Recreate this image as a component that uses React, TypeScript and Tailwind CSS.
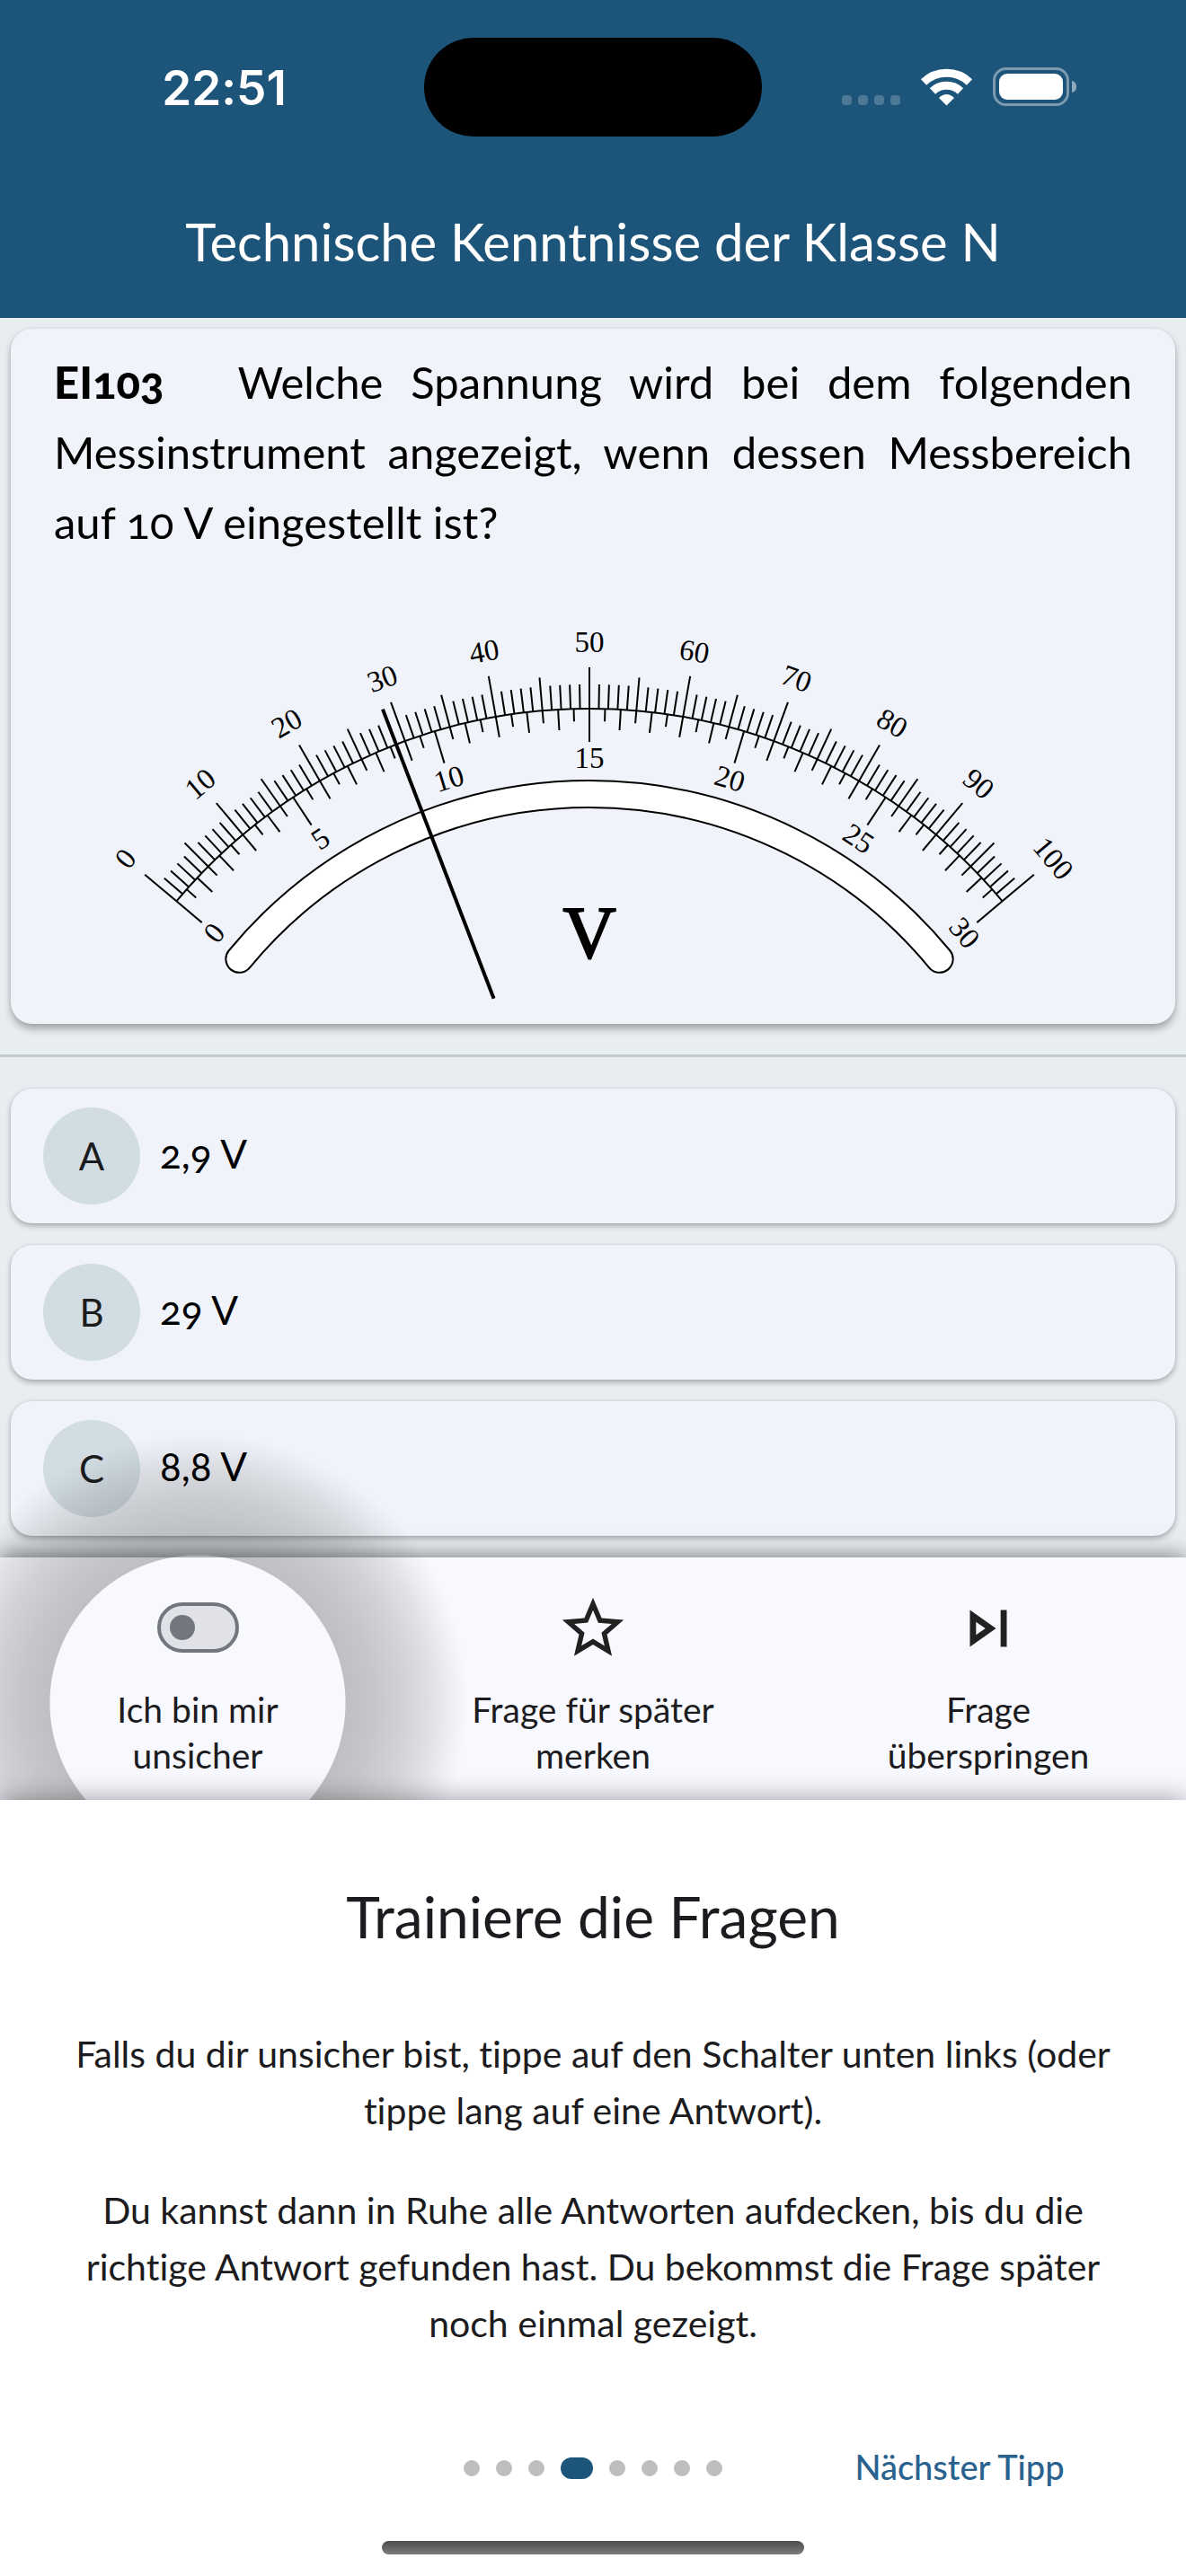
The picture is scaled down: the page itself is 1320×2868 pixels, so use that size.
const CX = 596;
const CY = 767;

function polar(radius: number, deg: number): [number, number] {
  const a = (deg * Math.PI) / 180;
  return [CX + radius * Math.sin(a), CY - radius * Math.cos(a)];
}

function Ray({ deg, from, to, width = 2 }: { deg: number; from: number; to: number; width?: number }) {
  const [x1, y1] = polar(from, deg);
  const [x2, y2] = polar(to, deg);
  return <line x1={x1} y1={y1} x2={x2} y2={y2} stroke="black" strokeWidth={width} />;
}

function DialLabel({ deg, radius, text }: { deg: number; radius: number; text: string }) {
  const [x, y] = polar(radius, deg);
  return (
    <text x={x} y={y + 11} textAnchor="middle" fontSize={33} transform={`rotate(${deg} ${x} ${y})`}>
      {text}
    </text>
  );
}

function arc(radius: number, halfAngle = 50) {
  const [x1, y1] = polar(radius, -halfAngle);
  const [x2, y2] = polar(radius, halfAngle);
  return `M${x1} ${y1}A${radius} ${radius} 0 0 1 ${x2} ${y2}`;
}

function Voltmeter() {
  const upper = Array.from({ length: 101 }, (_, i) => i);
  const lower = Array.from({ length: 61 }, (_, i) => i);
  return (
    <svg
      viewBox="0 0 1200 500"
      className="block w-full font-['Liberation_Serif',serif]"
      role="img"
      aria-label="Zeigerinstrument mit Skalen 0 bis 100 und 0 bis 30"
    >
      <path d={arc(600)} fill="none" stroke="black" strokeWidth={2} />
      {upper.map((i) => (
        <Ray key={i} deg={i - 50} from={600} to={i % 10 === 0 ? 646 : i % 5 === 0 ? 637 : 627} />
      ))}
      {lower.map((i) => (
        <Ray key={i} deg={(i * 5) / 3 - 50} from={600} to={i % 10 === 0 ? 563 : i % 2 === 0 ? 577 : 586} />
      ))}
      {upper.filter((i) => i % 10 === 0).map((i) => (
        <DialLabel key={i} deg={i - 50} radius={674} text={String(i)} />
      ))}
      {lower.filter((i) => i % 10 === 0).map((i) => (
        <DialLabel key={i} deg={(i * 5) / 3 - 50} radius={545} text={String(i / 2)} />
      ))}
      <path d={arc(505, 50.5)} fill="none" stroke="black" strokeWidth={32} strokeLinecap="round" />
      <path d={arc(505, 50.5)} fill="none" stroke="white" strokeWidth={28} strokeLinecap="round" />
      <Ray deg={-21} from={297} to={642} width={4} />
      <text x={CX} y={444} textAnchor="middle" fontSize={82} stroke="black" strokeWidth={2}>
        V
      </text>
    </svg>
  );
}

function StatusBar() {
  return (
    <div className="grid h-[194px] grid-cols-[1fr_376px_1fr] items-center">
      <span className="pt-[2px] pl-[27px] text-center font-['Inter',sans-serif] text-[53px] leading-[60px] font-semibold">
        22:51
      </span>
      <div className="h-[110px] rounded-full bg-black" />
      <div className="flex justify-end pr-[120px]">
        <svg viewBox="0 0 264 44" className="w-[264px]" aria-hidden="true">
          {[0, 18, 36, 54].map((x) => (
            <rect key={x} x={x + 1} y={31} width={11} height={11} rx={4} fill="white" opacity={0.22} />
          ))}
          <g fill="none" stroke="white" strokeWidth={9}>
            <path d="M92 16.500A37 37 0 0 1 143 16.500" />
            <path d="M102 26.500A22.500 22.500 0 0 1 133 26.500" />
          </g>
          <path d="M117.500 42.500L109 34Q117.500 26 126 34Z" fill="white" />
          <rect x={170.500} y={1.500} width={82} height={40} rx={13} fill="none" stroke="white" strokeWidth={3} opacity={0.42} />
          <rect x={176} y={7} width={71} height={29} rx={9} fill="white" />
          <path d="M257 15Q262 16 262 21.500Q262 27 257 28Z" fill="white" opacity={0.5} />
        </svg>
      </div>
    </div>
  );
}

function Answer({ letter, text }: { letter: string; text: string }) {
  return (
    <button
      type="button"
      className="flex w-full items-center gap-[22px] rounded-[24px] bg-[#f0f3f9] px-[36px] py-[21px] text-left shadow-[0_3px_6px_rgba(0,0,0,0.28),0_0_3px_rgba(0,0,0,0.08)]"
    >
      <span className="flex size-[108px] items-center justify-center rounded-full bg-[#d2dde3] text-[42px] leading-[54px] text-[#1b1c1e]">
        {letter}
      </span>
      <span className="pb-[6px] text-[44px] leading-[54px] text-black oldstyle-nums">{text}</span>
    </button>
  );
}

const answers = [
  ["A", "2,9 V"],
  ["B", "29 V"],
  ["C", "8,8 V"],
];

export default function App() {
  return (
    <div className="flex min-h-screen flex-col overflow-hidden bg-[#e8edf1] font-['Lato',sans-serif] [font-variant-ligatures:none]">
      <header className="bg-[#1d5479] text-white">
        <StatusBar />
        <h1 className="flex h-[160px] items-center justify-center pb-[10px] text-[58px] leading-[72px]">
          Technische Kenntnisse der Klasse N
        </h1>
      </header>

      <main className="flex-1">
        <section className="mx-[12px] mt-[12px] h-[774px] rounded-[24px] bg-[#f0f3f9] px-[48px] pt-[20px] shadow-[0_6px_9px_rgba(0,0,0,0.28),0_0_4px_rgba(0,0,0,0.08)]">
          <p className="pb-[2px] text-justify text-[49px] leading-[78px] text-black oldstyle-nums">
            <strong className="mr-[52px] font-black">EI103</strong> Welche Spannung wird bei dem folgenden Messinstrument
            angezeigt, wenn dessen Messbereich auf&nbsp;10&nbsp;V eingestellt ist?
          </p>
          <Voltmeter />
        </section>
        <hr className="mt-[34px] border-t-[3px] border-[#c3cacd]" />
        <div className="flex flex-col gap-[24px] px-[12px] pt-[35px] pb-[24px]">
          {answers.map(([letter, text]) => (
            <Answer key={letter} letter={letter} text={text} />
          ))}
        </div>
      </main>

      <nav className="relative grid h-[270px] grid-cols-3 bg-[#f8f9ff] text-[39px] leading-[51px] text-[#1b1b20] shadow-[0_0_24px_rgba(0,0,0,0.55)]">
        <div className="pointer-events-none absolute top-[162px] left-1/6 size-[604px] -translate-x-1/2 -translate-y-1/2 bg-[radial-gradient(circle,transparent_164px,rgba(0,0,0,0.23)_165px,rgba(0,0,0,0.205)_195px,rgba(0,0,0,0.155)_230px,rgba(0,0,0,0.095)_262px,rgba(0,0,0,0.04)_283px,transparent_301px)]" />
        <label className="relative flex flex-col items-center pt-[50px] text-center">
          <input type="checkbox" role="switch" className="peer sr-only" />
          <span className="flex h-[56px] w-[91px] items-center rounded-full border-[4px] border-[#72777e] bg-[#e0e2e8] pl-[10px]">
            <span className="size-[28px] rounded-full bg-[#72777e]" />
          </span>
          <span className="mt-[38px]">
            Ich bin mir
            <br />
            unsicher
          </span>
        </label>
        <button type="button" className="relative flex flex-col items-center pt-[38px]">
          <svg viewBox="0 0 24 24" className="size-[82px]" fill="#212121" aria-hidden="true">
            <path d="M22 9.240l-7.190-.62L12 2 9.190 8.630 2 9.240l5.460 4.730L5.820 21 12 17.270 18.180 21l-1.630-7.030L22 9.240zM12 15.400l-3.760 2.270 1-4.280-3.320-2.880 4.380-.38L12 6.100l1.710 4.040 4.380.38-3.320 2.880 1 4.280L12 15.400z" />
          </svg>
          <span className="mt-[24px]">
            Frage für später
            <br />
            merken
          </span>
        </button>
        <button type="button" className="relative flex flex-col items-center pt-[38px]">
          <svg viewBox="0 0 24 24" className="size-[82px]" fill="#212121" aria-hidden="true">
            <path d="M6 18l8.500-6L6 6v12zm2-8.140L11.030 12 8 14.140V9.860zM16 6h2v12h-2z" />
          </svg>
          <span className="mt-[24px]">
            Frage
            <br />
            überspringen
          </span>
        </button>
      </nav>

      <section className="relative flex h-[864px] flex-col items-center bg-white text-center text-[#1b1b20] shadow-[0_0_28px_rgba(0,0,0,0.4)]">
        <h2 className="mt-[91px] text-[64px] leading-[78px]">Trainiere die Fragen</h2>
        <div className="mt-[82px] flex flex-col gap-[48px] px-[72px] text-[41px] leading-[63px]">
          <p>Falls du dir unsicher bist, tippe auf den Schalter unten links (oder tippe lang auf eine Antwort).</p>
          <p>
            Du kannst dann in Ruhe alle Antworten aufdecken, bis du die richtige Antwort gefunden hast. Du bekommst die
            Frage später noch einmal gezeigt.
          </p>
        </div>
        <div className="mt-auto grid h-[60px] w-full grid-cols-3 items-center">
          <div className="col-start-2 flex items-center justify-center gap-[18px]">
            {[0, 1, 2, 3, 4, 5, 6, 7].map((i) =>
              i === 3 ? (
                <span key={i} className="h-[24px] w-[36px] rounded-[12px] bg-[#1d5479]" />
              ) : (
                <span key={i} className="size-[18px] rounded-full bg-[#bebebe]" />
              ),
            )}
          </div>
          <button type="button" className="pr-[64px] pb-[4px] text-center text-[38px] leading-[56px] font-medium text-[#2a628f]">
            Nächster Tipp
          </button>
        </div>
        <div className="mt-[51px] mb-[24px] h-[15px] w-[470px] rounded-full bg-linear-to-b from-[#4c4c4c] to-[#7e7e7e]" />
      </section>
    </div>
  );
}
